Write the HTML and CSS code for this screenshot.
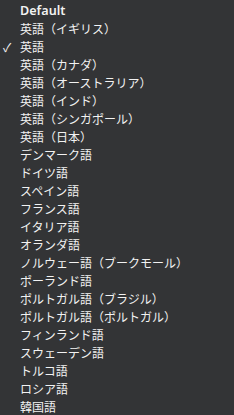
FILE: index.html
```html
<!DOCTYPE html>
<html lang="ja">
<head>
<meta charset="utf-8">
<link rel="stylesheet" href="styles.css">
</head>
<body>
<ul class="menu">
  <li class="item default">Default</li>
  <li class="item">英語（イギリス）</li>
  <li class="item checked"><span class="check">✓</span>英語</li>
  <li class="item">英語（カナダ）</li>
  <li class="item">英語（オーストラリア）</li>
  <li class="item">英語（インド）</li>
  <li class="item">英語（シンガポール）</li>
  <li class="item">英語（日本）</li>
  <li class="item">デンマーク語</li>
  <li class="item">ドイツ語</li>
  <li class="item">スペイン語</li>
  <li class="item">フランス語</li>
  <li class="item">イタリア語</li>
  <li class="item">オランダ語</li>
  <li class="item">ノルウェー語（ブークモール）</li>
  <li class="item">ポーランド語</li>
  <li class="item">ポルトガル語（ブラジル）</li>
  <li class="item">ポルトガル語（ポルトガル）</li>
  <li class="item">フィンランド語</li>
  <li class="item">スウェーデン語</li>
  <li class="item">トルコ語</li>
  <li class="item">ロシア語</li>
  <li class="item">韓国語</li>
</ul>
</body>
</html>
```
FILE: styles.css
```css
html, body {
  margin: 0;
  padding: 0;
  background: #333436;
  height: 100%;
}
body {
  font-family: "Noto Sans CJK JP", "Noto Sans", sans-serif;
  font-size: 12px;
  font-weight: 400;
  color: #f2f2f2;
  overflow: hidden;
}
.menu {
  list-style: none;
  margin: 0;
  padding: 2px 0 0 0;
}
.item {
  position: relative;
  height: 18px;
  line-height: 18px;
  padding-left: 20px;
  white-space: nowrap;
}
.default {
  font-family: "Noto Sans", "Liberation Sans", sans-serif;
  font-size: 12.6px;
  font-weight: 600;
}
.check {
  position: absolute;
  left: 3px;
  top: 0;
  font-size: 12px;
}
```
